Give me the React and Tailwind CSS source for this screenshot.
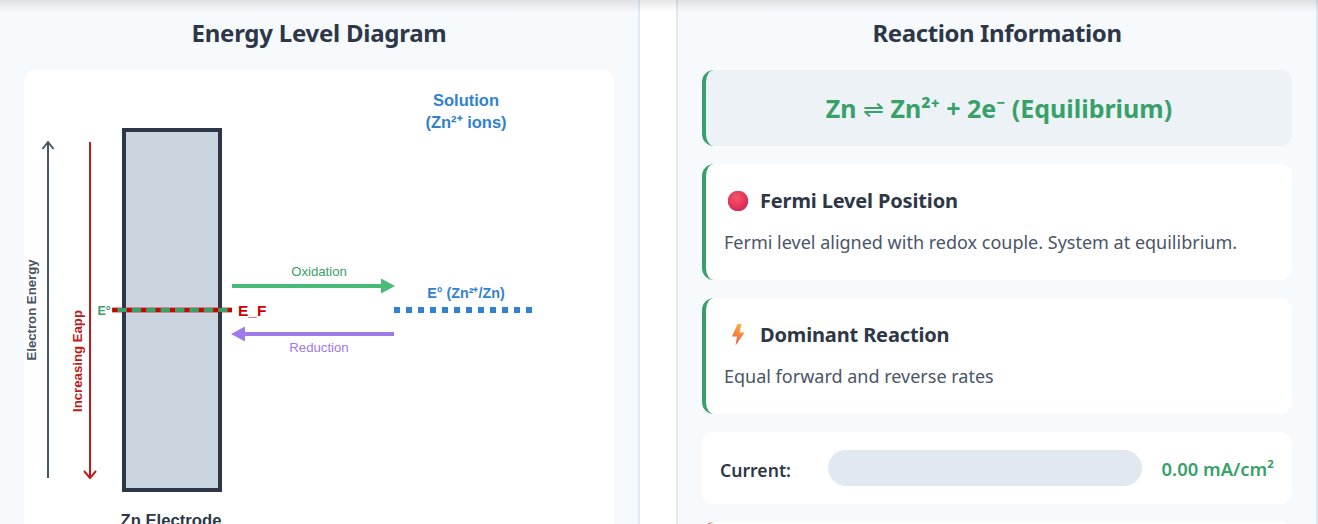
import React from 'react';

const Sphere = () => (
  <svg width="20" height="20" viewBox="0 0 20 20" className="shrink-0">
    <defs>
      <radialGradient id="sphereFill" cx="0.42" cy="0.35" r="0.72">
        <stop offset="0" stopColor="#f4566c" />
        <stop offset="0.65" stopColor="#e5335a" />
        <stop offset="1" stopColor="#bf2a66" />
      </radialGradient>
    </defs>
    <circle cx="10" cy="10" r="10.3" fill="url(#sphereFill)" />
  </svg>
);

const Bolt = () => (
  <svg width="20" height="22" viewBox="0 0 20 22" className="shrink-0">
    <defs>
      <linearGradient id="boltFill" x1="0.6" y1="0" x2="0.4" y2="1">
        <stop offset="0" stopColor="#fbb040" />
        <stop offset="1" stopColor="#f0563f" />
      </linearGradient>
    </defs>
    <path d="M9.5 0 L13.5 0 L11.5 8.5 L16.5 8.5 L7.5 21.5 L9 12.5 L4 12.5 Z" fill="url(#boltFill)" />
  </svg>
);

const InfoCard = ({ icon, title, text }) => (
  <div className="bg-white rounded-xl border-l-4 border-[#38a169] h-[116px] pl-[18px] pr-5 pt-5">
    <div className="flex items-center gap-3 h-[33px]">
      <span className="w-5 ml-1 flex justify-center">{icon}</span>
      <h3 className="text-xl font-bold tracking-[-0.15px] text-[#2d3748] leading-[33px]">{title}</h3>
    </div>
    <p className="mt-3 text-lg leading-[26px] text-[#4a5568]">{text}</p>
  </div>
);

// energy diagram, coordinates are card relative (card starts at 24,70)
const EnergyDiagram = () => (
  <svg width="590" height="470" viewBox="0 0 590 470" className="block" style={{ fontFamily: '"Liberation Sans", Arial, sans-serif' }}>
    <text x="442" y="36" textAnchor="middle" fontSize="16.5" fontWeight="700" fill="#3182ce">Solution</text>
    <text x="442" y="58" textAnchor="middle" fontSize="16.5" fontWeight="700" fill="#3182ce">(Zn²⁺ ions)</text>

    {/* electron energy axis */}
    <line x1="24" y1="408" x2="24" y2="72" stroke="#4a5568" strokeWidth="2" />
    <path d="M18.5 79 L24 72 L29.5 79" fill="none" stroke="#4a5568" strokeWidth="2" />
    <text transform="translate(12 240) rotate(-90)" textAnchor="middle" fontSize="13.2" fontWeight="700" fill="#4a5568">Electron Energy</text>

    {/* applied potential axis */}
    <line x1="66" y1="72" x2="66" y2="408" stroke="#c01a1a" strokeWidth="2" />
    <path d="M60 401 L66 408 L72 401" fill="none" stroke="#c01a1a" strokeWidth="2" />
    <text transform="translate(58 291) rotate(-90)" textAnchor="middle" fontSize="13.2" fontWeight="700" fill="#c01a1a">Increasing Eapp</text>

    {/* electrode */}
    <rect x="100" y="60" width="96" height="360" fill="#cbd5e0" stroke="#2d3748" strokeWidth="4" />
    <text x="147" y="456" textAnchor="middle" fontSize="16.7" fontWeight="700" fill="#2d3748">Zn Electrode</text>

    {/* fermi level and E0 overlay */}
    <line x1="88" y1="240" x2="208" y2="240" stroke="#cc0000" strokeOpacity="0.35" strokeWidth="6" />
    <line x1="88" y1="240" x2="208" y2="240" stroke="#cc0000" strokeWidth="4" />
    <line x1="88" y1="240" x2="208" y2="240" stroke="#38a169" strokeWidth="4" strokeDasharray="9.4 5" strokeDashoffset="-5.4" />
    <text x="73.5" y="245" fontSize="12.5" fontWeight="700" fill="#38a169">E°</text>
    <text x="214" y="246" fontSize="15.5" fontWeight="700" fill="#cc0000">E_F</text>

    {/* oxidation */}
    <line x1="208" y1="216" x2="358" y2="216" stroke="#48bb78" strokeWidth="4" />
    <polygon points="357,208.5 371,216 357,223.5" fill="#48bb78" />
    <text x="295" y="206" textAnchor="middle" fontSize="13.2" fill="#38a169">Oxidation</text>

    {/* reduction */}
    <line x1="220" y1="264" x2="370" y2="264" stroke="#9f7aea" strokeWidth="4" />
    <polygon points="221,256.5 207,264 221,271.5" fill="#9f7aea" />
    <text x="295" y="282" textAnchor="middle" fontSize="13.2" fill="#9f7aea">Reduction</text>

    {/* redox couple */}
    <line x1="370" y1="240" x2="510" y2="240" stroke="#3182ce" strokeWidth="6" strokeDasharray="6 6" />
    <text x="442" y="228" textAnchor="middle" fontSize="14.3" fontWeight="700" fill="#3182ce">E° (Zn²⁺/Zn)</text>
  </svg>
);

export default function App() {
  return (
    <div className="relative h-[524px] overflow-hidden bg-white" style={{ fontFamily: '"Noto Sans", sans-serif' }}>
      <div className="absolute inset-x-0 top-0 h-3 bg-gradient-to-b from-black/10 to-transparent" />
      <div className="-ml-0.5 w-[1320px] grid grid-cols-2 gap-9">
        {/* left panel */}
        <section className="h-[524px] bg-[#f7fafc] border-x-2 border-[#e2e8f0] px-6 pt-[17px]">
          <h2 className="text-2xl font-bold tracking-[-0.25px] text-[#2d3748] text-center leading-8">Energy Level Diagram</h2>
          <div className="mt-[21px] bg-white rounded-xl h-[470px] overflow-hidden">
            <EnergyDiagram />
          </div>
        </section>

        {/* right panel */}
        <section className="h-[524px] bg-[#f7fafc] border-x-2 border-[#e2e8f0] px-6 pt-[17px]">
          <h2 className="text-2xl font-bold tracking-[-0.4px] text-[#2d3748] text-center leading-8">Reaction Information</h2>
          <div className="mt-[21px] flex flex-col gap-[18px]">
            <div className="h-[76px] rounded-xl bg-[#edf2f7] border-l-4 border-[#38a169] flex items-center justify-center">
              <span className="mt-0.5 text-[25px] font-bold text-[#38a169]">Zn <span className="font-normal">⇌</span> Zn²⁺ + 2e⁻ (Equilibrium)</span>
            </div>
            <InfoCard icon={<Sphere />} title="Fermi Level Position" text="Fermi level aligned with redox couple. System at equilibrium." />
            <InfoCard icon={<Bolt />} title="Dominant Reaction" text="Equal forward and reverse rates" />
            <div className="h-[72px] rounded-xl bg-white px-[18px] flex items-center">
              <span className="w-[108px] mt-1 text-[17.6px] font-semibold text-[#2d3748]">Current:</span>
              <div className="w-[314px] h-9 rounded-full bg-[#e2e8f0]" />
              <span className="ml-auto mt-0.5 text-[18.4px] font-semibold text-[#38a169]">0.00 mA/cm²</span>
            </div>
            <div className="h-[116px] rounded-xl bg-white border-l-4 border-[#e53e3e]" />
          </div>
        </section>
      </div>
    </div>
  );
}
